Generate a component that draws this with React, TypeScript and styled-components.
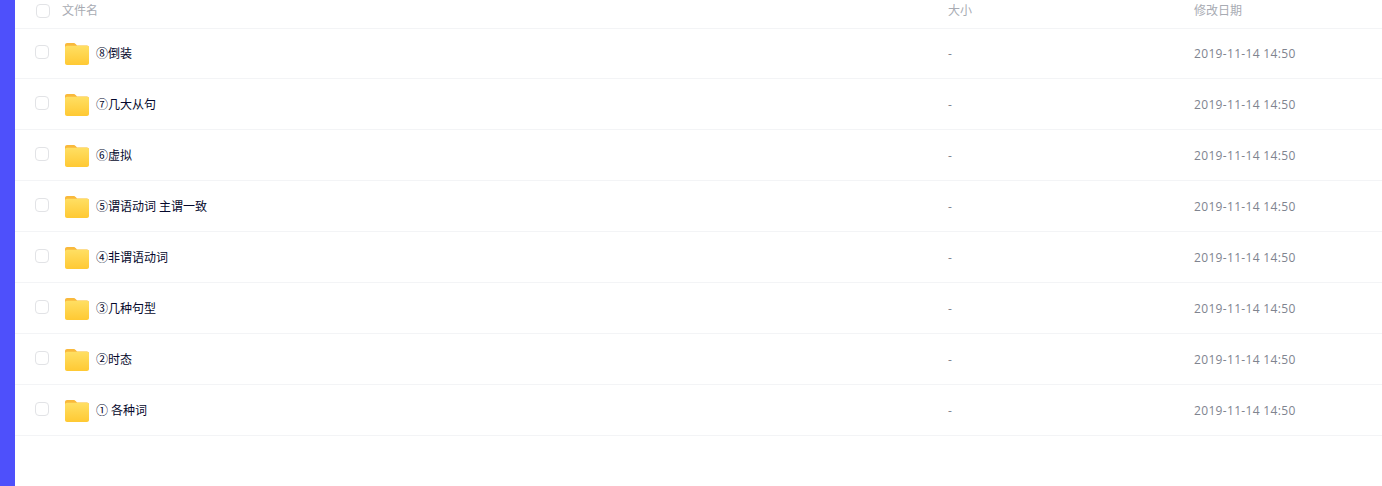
import React from "react";
import styled, { createGlobalStyle } from "styled-components";

const Global = createGlobalStyle`
  html, body { margin: 0; padding: 0; background: #fff; }
  body { font-family: "Open Sans", "Noto Sans CJK SC", sans-serif; }
`;

const Page = styled.div`
  display: flex;
  width: 1382px;
  height: 486px;
  overflow: hidden;
`;

const Sidebar = styled.div`
  width: 15px;
  flex: none;
  background: #4e50fb;
`;

const Main = styled.div`
  flex: 1;
  min-width: 0;
`;

const HeaderRow = styled.div`
  display: grid;
  grid-template-columns: 47px 886px 246px 1fr;
  height: 28px;
  margin-bottom: -1px;
  border-bottom: 1px solid #f3f4f6;
  align-items: start;
  font-size: 12px;
  line-height: 20px;
  color: #a8abb3;
`;

const HeaderCheckCell = styled.div`
  padding: 4px 0 0 21px;
`;

const HeaderCell = styled.div`
  padding-top: 1px;
`;

const Box = styled.div`
  width: 12px;
  height: 12px;
  border: 1px solid #e2e3e6;
  border-radius: 4px;
  background: #fff;
`;

const Row = styled.div`
  display: grid;
  grid-template-columns: 50px 883px 246px 1fr;
  height: 50px;
  border-bottom: 1px solid #f3f4f6;
  align-items: center;
  font-size: 12px;
`;

const CheckCell = styled.div`
  padding: 0 0 2px 20px;
`;

const NameCell = styled.div`
  display: flex;
  align-items: center;
  gap: 7px;
  color: #05082c;
  padding-top: 1px;
`;

const NameText = styled.span`
  margin-bottom: 2px;
`;

const Muted = styled.div`
  color: #80848f;
`;

const DateText = styled(Muted)`
  letter-spacing: 0.33px;
`;

const FolderIcon = () => (
  <svg width="24" height="22" viewBox="0 0 24 22" style={{ flex: "none" }}>
    <path d="M2 0h6.500c1 0 1.500.4 2.200 1.100L12 2.400h10c1.100 0 2 .9 2 2V8H0V2C0 .9.900 0 2 0z" fill="#f9b93c" />
    <path d="M2 2.700h20c1.100 0 2 .9 2 2V20c0 1.100-.9 2-2 2H2c-1.100 0-2-.9-2-2V4.700c0-1.100.9-2 2-2z" fill="url(#folderFill)" />
    <defs>
      <linearGradient id="folderFill" x1="0" y1="0" x2="0" y2="1">
        <stop offset="0" stopColor="#ffdf63" />
        <stop offset="1" stopColor="#ffc933" />
      </linearGradient>
    </defs>
  </svg>
);

const names = [
  "⑧倒装",
  "⑦几大从句",
  "⑥虚拟",
  "⑤谓语动词 主谓一致",
  "④非谓语动词",
  "③几种句型",
  "②时态",
  "① 各种词",
];

export default function App() {
  return (
    <Page>
      <Global />
      <Sidebar />
      <Main>
        <HeaderRow>
          <HeaderCheckCell>
            <Box />
          </HeaderCheckCell>
          <HeaderCell>文件名</HeaderCell>
          <HeaderCell>大小</HeaderCell>
          <HeaderCell>修改日期</HeaderCell>
        </HeaderRow>
        {names.map((n) => (
          <Row key={n}>
            <CheckCell>
              <Box />
            </CheckCell>
            <NameCell>
              <FolderIcon />
              <NameText>{n}</NameText>
            </NameCell>
            <Muted>-</Muted>
            <DateText>2019-11-14 14:50</DateText>
          </Row>
        ))}
      </Main>
    </Page>
  );
}
